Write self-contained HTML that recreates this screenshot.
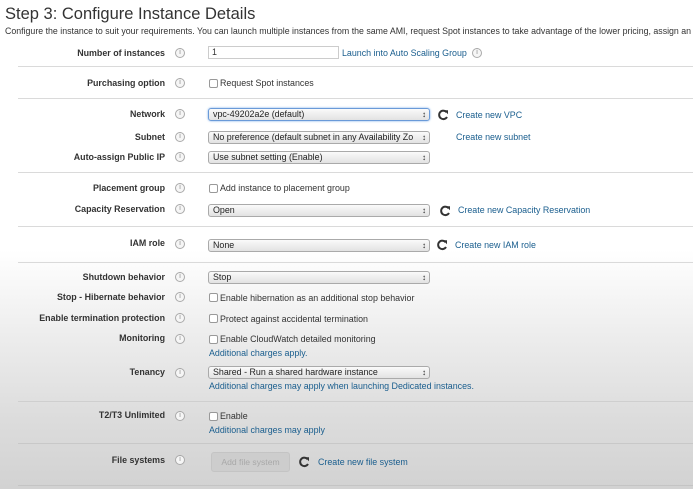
<!DOCTYPE html>
<html><head><style>
*{margin:0;padding:0;box-sizing:border-box}
body{width:693px;height:489px;overflow:hidden;position:relative;font-family:"Liberation Sans",Arial,sans-serif;
background:linear-gradient(180deg,#fff 0px,#fff 250px,#ececec 340px,#dcdcdc 420px,#d2d2d2 489px);color:#333}
.a{position:absolute;white-space:nowrap}
.h1{left:5px;top:5px;font-size:16.5px;color:#333}
.sub{left:5px;top:26px;font-size:8.8px;color:#333}
.lbl{font-size:8.9px;font-weight:bold;right:528px;text-align:right;color:#333}
.i{width:10px;height:10px;border:1px solid #aaa;border-radius:50%;left:175px;font-size:7px;color:#888;text-align:center;line-height:8px;background:#f6f6f6}
.sel{left:208px;width:222px;height:13px;border:1px solid #aaa;border-radius:3px;background:linear-gradient(#fafafa,#e2e2e2);font-size:8.9px;padding-left:4px;line-height:11px;color:#222}
.sel:after{content:"\2195";position:absolute;right:3px;top:0;font-size:8px;font-weight:bold}
.cb{left:209px;width:9px;height:9px;border:1px solid #999;border-radius:2px;background:#fff}
.t{font-size:8.9px;color:#333}
.lk{font-size:8.9px;color:#1a5e8e}
.ln{left:18px;right:0;height:1px;background:#dadada}
.r{width:12px;height:12px}
</style></head><body>
<svg width="0" height="0" style="position:absolute"><defs><symbol id="rf" viewBox="0 0 12 12"><path d="M9.6 3.2A4.2 4.2 0 1 0 10 8" fill="none" stroke="#333" stroke-width="2"/><path d="M7 1.2L11 1.2L11 5.2Z" fill="#333"/></symbol></defs></svg>
<div class="a h1">Step 3: Configure Instance Details</div>
<div class="a sub">Configure the instance to suit your requirements. You can launch multiple instances from the same AMI, request Spot instances to take advantage of the lower pricing, assign an</div>

<div class="a lbl" style="top:48px">Number of instances</div><div class="a i" style="top:48px">i</div>
<div class="a" style="left:208px;top:46px;width:131px;height:13px;border:1px solid #ccc;background:#fff;font-size:8.9px;padding-left:3px;line-height:11px">1</div>
<div class="a lk" style="left:342px;top:48px">Launch into Auto Scaling Group</div><div class="a i" style="left:472px;top:48px">i</div>
<div class="a ln" style="top:66px"></div>

<div class="a lbl" style="top:78px">Purchasing option</div><div class="a i" style="top:78px">i</div>
<div class="a cb" style="top:79px"></div><div class="a t" style="left:220px;top:78px">Request Spot instances</div>
<div class="a ln" style="top:98px"></div>

<div class="a lbl" style="top:109px">Network</div><div class="a i" style="top:109px">i</div>
<div class="a sel" style="top:108px;border-color:#6a9ad8;box-shadow:0 0 2px #7aaae8">vpc-49202a2e (default)</div>
<svg class="a r" style="left:437px;top:109px"><use href="#rf"/></svg><div class="a lk" style="left:456px;top:110px">Create new VPC</div>

<div class="a lbl" style="top:132px">Subnet</div><div class="a i" style="top:132px">i</div>
<div class="a sel" style="top:131px">No preference (default subnet in any Availability Zo</div>
<div class="a lk" style="left:456px;top:132px">Create new subnet</div>

<div class="a lbl" style="top:152px">Auto-assign Public IP</div><div class="a i" style="top:152px">i</div>
<div class="a sel" style="top:151px">Use subnet setting (Enable)</div>
<div class="a ln" style="top:172px"></div>

<div class="a lbl" style="top:183px">Placement group</div><div class="a i" style="top:183px">i</div>
<div class="a cb" style="top:184px"></div><div class="a t" style="left:220px;top:183px">Add instance to placement group</div>

<div class="a lbl" style="top:204px">Capacity Reservation</div><div class="a i" style="top:204px">i</div>
<div class="a sel" style="top:204px">Open</div>
<svg class="a r" style="left:439px;top:205px"><use href="#rf"/></svg><div class="a lk" style="left:458px;top:205px">Create new Capacity Reservation</div>
<div class="a ln" style="top:226px"></div>

<div class="a lbl" style="top:238px">IAM role</div><div class="a i" style="top:239px">i</div>
<div class="a sel" style="top:239px">None</div>
<svg class="a r" style="left:436px;top:239px"><use href="#rf"/></svg><div class="a lk" style="left:455px;top:240px">Create new IAM role</div>
<div class="a ln" style="top:262px"></div>

<div class="a lbl" style="top:272px">Shutdown behavior</div><div class="a i" style="top:272px">i</div>
<div class="a sel" style="top:271px">Stop</div>

<div class="a lbl" style="top:292px">Stop - Hibernate behavior</div><div class="a i" style="top:292px">i</div>
<div class="a cb" style="top:293px"></div><div class="a t" style="left:220px;top:293px">Enable hibernation as an additional stop behavior</div>

<div class="a lbl" style="top:313px">Enable termination protection</div><div class="a i" style="top:313px">i</div>
<div class="a cb" style="top:314px"></div><div class="a t" style="left:220px;top:314px">Protect against accidental termination</div>

<div class="a lbl" style="top:333px">Monitoring</div><div class="a i" style="top:334px">i</div>
<div class="a cb" style="top:335px"></div><div class="a t" style="left:220px;top:334px">Enable CloudWatch detailed monitoring</div>
<div class="a lk" style="left:209px;top:348px">Additional charges apply.</div>

<div class="a lbl" style="top:367px">Tenancy</div><div class="a i" style="top:368px">i</div>
<div class="a sel" style="top:366px">Shared - Run a shared hardware instance</div>
<div class="a lk" style="left:209px;top:381px">Additional charges may apply when launching Dedicated instances.</div>
<div class="a ln" style="top:401px;background:#cfcfcf"></div>

<div class="a lbl" style="top:410px">T2/T3 Unlimited</div><div class="a i" style="top:411px">i</div>
<div class="a cb" style="top:412px"></div><div class="a t" style="left:220px;top:411px">Enable</div>
<div class="a lk" style="left:209px;top:425px">Additional charges may apply</div>
<div class="a ln" style="top:443px;background:#c8c8c8"></div>

<div class="a lbl" style="top:455px">File systems</div><div class="a i" style="top:455px">i</div>
<div class="a" style="left:211px;top:452px;width:79px;height:20px;border-radius:3px;background:#cdcdcd;border:1px solid #c4c4c4;font-size:8.6px;color:#a8a8a8;text-align:center;line-height:18px">Add file system</div>
<svg class="a r" style="left:298px;top:456px"><use href="#rf"/></svg><div class="a lk" style="left:318px;top:457px">Create new file system</div>
<div class="a ln" style="top:485px;background:#c4c4c4"></div>
</body></html>
